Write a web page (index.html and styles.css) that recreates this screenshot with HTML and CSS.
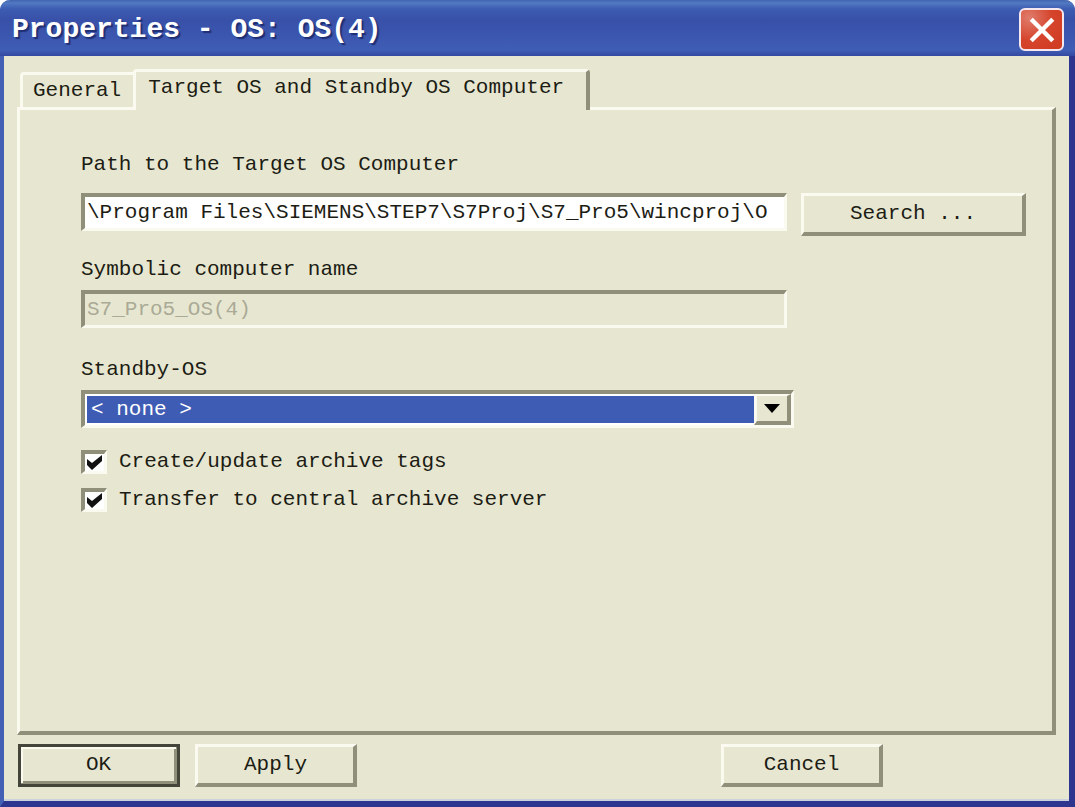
FILE: index.html
```html
<!DOCTYPE html>
<html lang="en">
<head>
<meta charset="utf-8">
<title>Properties - OS: OS(4)</title>
<link rel="stylesheet" href="styles.css">
</head>
<body>
<main class="window">
  <header class="titlebar">
    <h1 class="title">Properties - OS: OS(4)</h1>
    <button class="close" type="button" aria-label="Close">
      <svg viewBox="0 0 26 26" aria-hidden="true"><path d="M3 3L23 23M23 3L3 23"/></svg>
    </button>
  </header>
  <form class="content">
    <div class="tabs" role="tablist">
      <button class="tab" type="button" role="tab" aria-selected="false">General</button>
      <button class="tab tab-active" type="button" role="tab" aria-selected="true">Target OS and Standby OS Computer</button>
    </div>
    <section class="panel" role="tabpanel">
      <div class="field field-path">
        <label for="path">Path to the Target OS Computer</label>
        <div class="field-row">
          <input class="textbox" id="path" type="text" value="\Program Files\SIEMENS\STEP7\S7Proj\S7_Pro5\wincproj\O">
          <button class="button search" type="button">Search ...</button>
        </div>
      </div>
      <div class="field">
        <label for="symbolic">Symbolic computer name</label>
        <div class="field-row">
          <input class="textbox" id="symbolic" type="text" value="S7_Pro5_OS(4)" disabled>
        </div>
      </div>
      <div class="field">
        <label for="standby">Standby-OS</label>
        <div class="combo">
          <select id="standby"><option>&lt; none &gt;</option></select>
          <span class="combo-arrow"><svg viewBox="0 0 16 9" aria-hidden="true"><path d="M0 0H16L8 9Z"/></svg></span>
        </div>
      </div>
      <div class="checks">
        <label class="check"><input type="checkbox" checked>Create/update archive tags</label>
        <label class="check"><input type="checkbox" checked>Transfer to central archive server</label>
      </div>
    </section>
    <footer class="actions">
      <button class="button default" type="submit">OK</button>
      <button class="button" type="button">Apply</button>
      <button class="button cancel" type="button">Cancel</button>
    </footer>
  </form>
</main>
</body>
</html>
```
FILE: styles.css
```css
:root {
  --face: #e7e7d1;
  --light: #fbfaf0;
  --shadow: #8f8f7a;
  --blue: #3f5cb4;
  --ink: #1c1c14;
}

* { box-sizing: border-box; }

body {
  margin: 0;
  background: #fff;
}

.window,
.window button,
.window input,
.window select {
  font-family: "Liberation Mono", monospace;
  font-size: 21px;
  line-height: 24px;
  color: var(--ink);
}

.window {
  display: flex;
  flex-direction: column;
  min-height: 100vh;
  border: solid;
  border-width: 0 6px 6px 4px;
  border-color: #2e358e #2e358e #2e358e #4460b4;
  border-radius: 10px 10px 0 0;
}

.titlebar {
  display: flex;
  align-items: center;
  justify-content: space-between;
  height: 56px;
  margin: 0 -6px 0 -4px;
  padding: 3px 11px 0 12px;
  background: linear-gradient(#4264b2 0, #5279c2 3px, #3c5cb2 9px, #3850a8 20px, #3d59b2 42px, #405db5 50px, #3448a0 56px);
  border-radius: 10px 10px 0 0;
}

.window .title {
  margin: 0;
  font-size: 28px;
  line-height: 32px;
  font-weight: bold;
  color: #fff;
  text-shadow: 2px 2px 1px #1f2f74;
}

.close {
  display: grid;
  place-items: center;
  width: 45px;
  height: 43px;
  padding: 0;
  border: 2px solid #f4e8ee;
  border-radius: 6px;
  background: radial-gradient(circle at 20% 20%, #e07c6c, #d5442c 50%, #cf3a20);
}

.close svg {
  width: 28px;
  height: 28px;
  fill: none;
  stroke: #fff;
  stroke-width: 4;
}

.content {
  display: flex;
  flex: 1;
  flex-direction: column;
  padding: 13px 13px 12px;
  background: var(--face);
  border-bottom: 2px solid #cdd0dd;
}

.tabs {
  display: flex;
  align-items: flex-end;
  padding-left: 3px;
}

.tab {
  height: 35px;
  padding: 0 12px 0 10px;
  background: var(--face);
  border: 3px solid var(--light);
  border-right: 0;
  border-bottom: 0;
  border-radius: 4px 0 0 0;
}

.tab-active {
  z-index: 1;
  height: 41px;
  margin-bottom: -3px;
  padding: 0 22px 6px 12px;
  border-right: 4px solid var(--shadow);
  border-radius: 4px 4px 0 0;
}

.panel {
  display: flex;
  flex: 1;
  flex-direction: column;
  gap: 30px;
  padding: 43px 26px 40px 61px;
  border: 3px solid;
  border-color: var(--light) var(--shadow) var(--shadow) var(--light);
  border-width: 3px 4px 4px 3px;
}

.field {
  display: flex;
  flex-direction: column;
  gap: 8px;
}

.field-path {
  gap: 16px;
  margin-bottom: -8px;
}

.field-row {
  display: grid;
  grid-template-columns: 1fr 225px;
  align-items: start;
  gap: 14px;
}

.textbox {
  width: 100%;
  height: 38px;
  padding: 0 2px;
  background: #fff;
  border: solid;
  border-width: 4px 3px 3px 4px;
  border-color: var(--shadow) var(--light) var(--light) var(--shadow);
}

.window .textbox:disabled {
  background: var(--face);
  color: #aaaa96;
  opacity: 1;
}

.button {
  width: 162px;
  height: 43px;
  padding: 0;
  background: var(--face);
  border: solid;
  border-width: 3px 4px 4px 3px;
  border-color: var(--light) var(--shadow) var(--shadow) var(--light);
}

.search {
  width: 100%;
}

.combo {
  position: relative;
  margin-right: 232px;
  border: solid;
  border-width: 4px 3px 3px 4px;
  border-color: var(--shadow) var(--light) var(--light) var(--shadow);
}

.window .combo select {
  display: block;
  width: 100%;
  height: 31px;
  padding: 0 40px 0 4px;
  appearance: none;
  background: var(--blue);
  border: 2px solid #fff;
  border-radius: 0;
  color: #fff;
}

.combo-arrow {
  position: absolute;
  top: 0;
  right: 0;
  bottom: 0;
  display: grid;
  place-items: center;
  width: 37px;
  background: var(--face);
  border: solid;
  border-width: 2px 4px 4px 3px;
  border-color: var(--light) var(--shadow) var(--shadow) var(--light);
  pointer-events: none;
}

.combo-arrow svg {
  width: 16px;
  height: 9px;
}

.checks {
  display: flex;
  flex-direction: column;
  gap: 14px;
  margin-top: -8px;
}

.check {
  display: flex;
  align-items: center;
  gap: 12px;
}

.check input {
  width: 26px;
  height: 24px;
  margin: 0;
  appearance: none;
  border: solid;
  border-width: 4px 3px 3px 4px;
  border-color: var(--shadow) var(--light) var(--light) var(--shadow);
  background: #fff;
}

.check input:checked {
  background: #fff url("data:image/svg+xml,%3Csvg xmlns='http://www.w3.org/2000/svg' viewBox='0 0 19 17'%3E%3Cpath d='M2 5L7 9L17 1V7L7 16L2 11Z' fill='%23111'/%3E%3C/svg%3E") center / 100% 100% no-repeat;
}

.actions {
  display: flex;
  gap: 15px;
  padding: 9px 173px 0 1px;
}

.default {
  outline: 3px solid #44443a;
  outline-offset: -3px;
  box-shadow: inset 2px 2px var(--light), inset -2px -2px var(--shadow);
}

.cancel {
  margin-left: auto;
}
```
